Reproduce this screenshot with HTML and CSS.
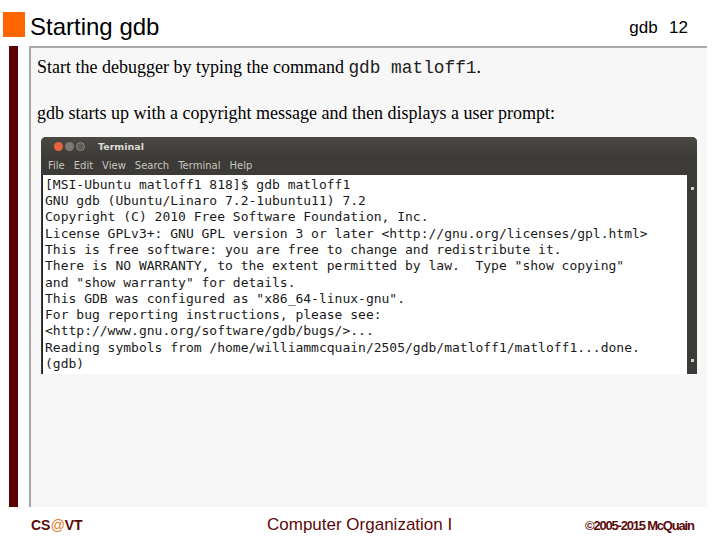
FILE: index.html
```html
<!DOCTYPE html>
<html>
<head>
<meta charset="utf-8">
<link rel="stylesheet" href="styles.css">
</head>
<body>
<div class="slide">
  <header class="head">
    <div class="mark"></div>
    <h1 class="title">Starting gdb</h1>
    <div class="pageno">gdb&nbsp; 12</div>
  </header>
  <main class="main">
    <div class="bar"></div>
    <section class="panel">
      <p class="txt t1">Start the debugger by typing the command <span class="code">gdb matloff1</span>.</p>
      <p class="txt t2">gdb starts up with a copyright message and then displays a user prompt:</p>
      <div class="term">
        <div class="tbar">
          <span class="btn close"></span><span class="btn"></span><span class="btn mid"></span>
          <span class="ttitle">Terminal</span>
        </div>
        <div class="menu"><span>File</span><span>Edit</span><span>View</span><span>Search</span><span>Terminal</span><span>Help</span></div>
        <div class="tbody">
<pre class="out">[MSI-Ubuntu matloff1 818]$ gdb matloff1
GNU gdb (Ubuntu/Linaro 7.2-1ubuntu11) 7.2
Copyright (C) 2010 Free Software Foundation, Inc.
License GPLv3+: GNU GPL version 3 or later &lt;http://gnu.org/licenses/gpl.html&gt;
This is free software: you are free to change and redistribute it.
There is NO WARRANTY, to the extent permitted by law.  Type "show copying"
and "show warranty" for details.
This GDB was configured as "x86_64-linux-gnu".
For bug reporting instructions, please see:
&lt;http://www.gnu.org/software/gdb/bugs/&gt;...
Reading symbols from /home/williammcquain/2505/gdb/matloff1/matloff1...done.
(gdb)</pre>
          <div class="scroll"><span class="arr up"></span><span class="thumb"></span><span class="arr dn"></span></div>
        </div>
      </div>
    </section>
  </main>
  <footer class="foot">
    <div class="cs">CS<span class="at">@</span>VT</div>
    <div class="course">Computer Organization I</div>
    <div class="copy">©2005-2015 McQuain</div>
  </footer>
</div>
</body>
</html>
```

FILE: styles.css
```css
html, body { margin: 0; padding: 0; background: #ffffff; }
.slide { width: 720px; height: 540px; display: flex; flex-direction: column; font-family: "Liberation Sans", Arial, sans-serif; overflow: hidden; }

.head { height: 46px; display: flex; align-items: flex-start; }
.mark { width: 22px; height: 25px; background: #ff6600; margin: 12px 0 0 3px; }
.title { margin: 13px 0 0 5px; font-weight: normal; font-size: 24px; line-height: 28px; color: #000; flex: 1; }
.pageno { margin: 18px 32px 0 0; font-size: 17px; line-height: 20px; color: #000; word-spacing: 1px; }

.main { height: 464px; display: flex; }
.bar { width: 9px; margin-left: 9px; background: #5c0000; }
.panel { margin-left: 11px; width: 676px; height: 459px; background: #f7f7f7; border-left: 2px solid #a8a8a8; border-top: 2px solid #a8a8a8; }

.txt { margin: 0; font-family: "Liberation Serif", "Times New Roman", serif; font-size: 18px; line-height: 20px; color: #000; padding-left: 6px; }
.t1 { padding-top: 9px; }
.t2 { padding-top: 25px; }
.code { font-family: "Liberation Mono", "Courier New", monospace; font-size: 17.8px; color: #222; }

.term { margin: 14px 0 0 10px; width: 656px; height: 237px; background: #3c3b37; border-radius: 5px 5px 0 0; display: flex; flex-direction: column; }
.tbar { height: 20px; display: flex; align-items: center; padding-left: 13px; background: linear-gradient(#4a4944, #3c3b37); border-radius: 5px 5px 0 0; }
.btn { width: 9px; height: 9px; border-radius: 50%; background: #7d7b74; margin-right: 2px; }
.btn.close { background: #e9643a; }
.btn.mid { background: #5e5c56; border: 1px solid #8a887f; width: 7px; height: 7px; }
.ttitle { margin-left: 11px; font-family: "DejaVu Sans", sans-serif; font-weight: bold; font-size: 9.5px; color: #dfdbd2; }
.menu { height: 18px; display: flex; align-items: center; gap: 9px; padding-left: 7px; font-family: "DejaVu Sans", sans-serif; font-size: 10px; color: #c8c5bd; }
.tbody { flex: 1; display: flex; background: #ffffff; margin-left: 1px; border-left: 1px solid #222; }
.out { margin: 0; flex: 1; padding: 2px 0 0 2px; font-family: "DejaVu Sans Mono", monospace; font-size: 13px; line-height: 16.3px; color: #1a1a1a; }
.scroll { width: 10px; background: #3c3b37; display: flex; flex-direction: column; align-items: center; }
.arr { width: 3px; height: 3px; background: #cfcfcf; margin-top: 12px; }
.thumb { flex: 1; }
.arr.dn { margin: 0 0 12px 0; }

.foot { height: 30px; display: flex; align-items: center; padding-top: 3px; color: #5c0a0a; font-family: "Liberation Sans", Arial, sans-serif; }
.cs { margin-left: 31px; font-weight: bold; font-size: 14px; width: 236px; }
.at { color: #e87722; font-style: italic; font-weight: normal; }
.course { font-size: 17px; width: 318px; }
.copy { font-size: 13px; font-weight: bold; letter-spacing: -1.2px; }
```
